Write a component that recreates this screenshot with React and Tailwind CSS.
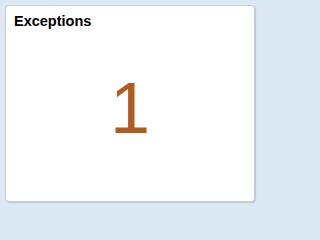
export default function App() {
  return (
    <div className="h-screen min-h-[205px] w-full min-w-[258px] bg-[#dce8f3] p-[5px] pr-[3px] pb-[3px]">
      <div
        className="flex h-[197px] w-[250px] flex-col rounded-[4px] border border-[#c3d0db] bg-white shadow-[1px_1px_1px_rgba(150,170,190,0.5)]"
        style={{ fontFamily: '"Liberation Sans", Arial, sans-serif' }}
      >
        <h2 className="px-[8px] pt-[6px] text-[14.5px] font-bold leading-[18px] text-black">Exceptions</h2>
        <div className="flex flex-1 items-start justify-center pt-[42px]">
          <span className="text-[72px] leading-none text-[#b15b1f]">1</span>
        </div>
      </div>
    </div>
  );
}
